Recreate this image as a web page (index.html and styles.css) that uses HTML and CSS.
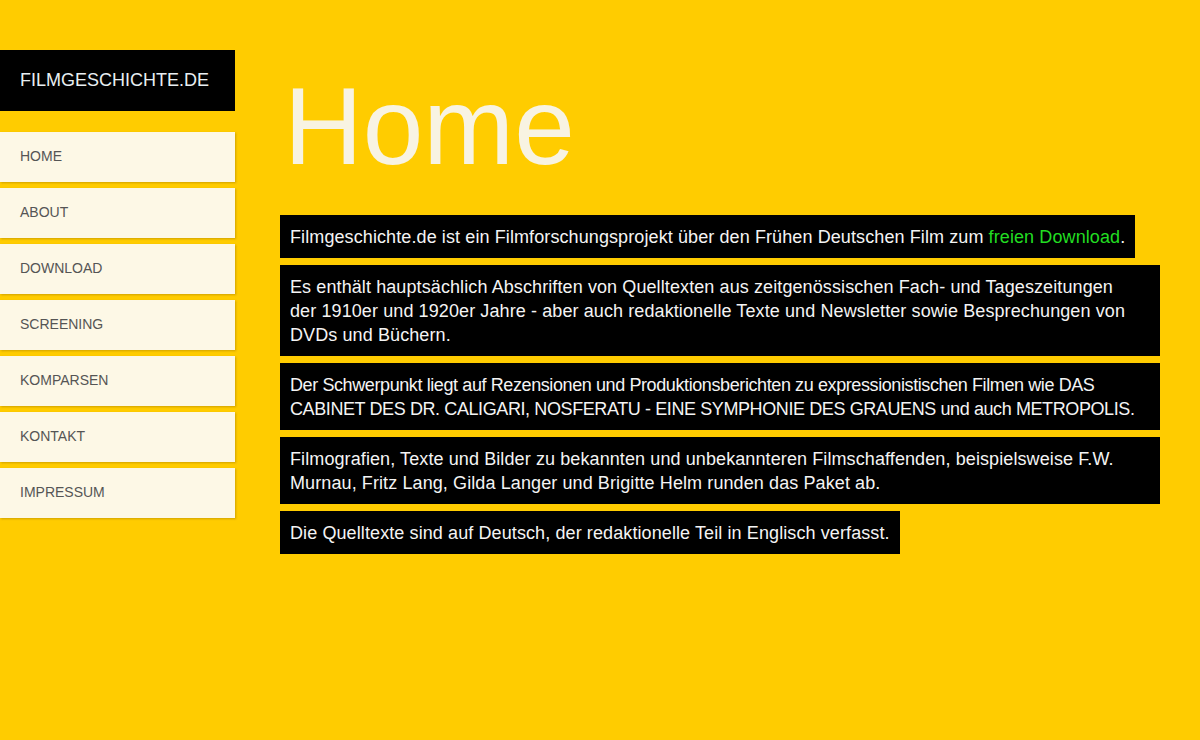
FILE: index.html
```
<!DOCTYPE html>
<html lang="de">
<head>
<meta charset="utf-8">
<title>Filmgeschichte.de</title>
<link rel="stylesheet" href="styles.css">
</head>
<body>
<div class="page">
  <aside class="sidebar">
    <div class="logo">FILMGESCHICHTE.DE</div>
    <nav class="nav">
      <a class="nav-item" href="#">HOME</a>
      <a class="nav-item" href="#">ABOUT</a>
      <a class="nav-item" href="#">DOWNLOAD</a>
      <a class="nav-item" href="#">SCREENING</a>
      <a class="nav-item" href="#">KOMPARSEN</a>
      <a class="nav-item" href="#">KONTAKT</a>
      <a class="nav-item" href="#">IMPRESSUM</a>
    </nav>
  </aside>
  <main class="main">
    <h1 class="title">Home</h1>
    <div class="boxes">
      <p class="box">Filmgeschichte.de ist ein Filmforschungsprojekt über den Frühen Deutschen Film zum <a class="link" href="#">freien Download</a>.</p>
      <p class="box">Es enthält hauptsächlich Abschriften von Quelltexten aus zeitgenössischen Fach- und Tageszeitungen<br>der 1910er und 1920er Jahre - aber auch redaktionelle Texte und Newsletter sowie Besprechungen von DVDs und Büchern.</p>
      <p class="box box-tight">Der Schwerpunkt liegt auf Rezensionen und Produktionsberichten zu expressionistischen Filmen wie DAS CABINET DES DR. CALIGARI, NOSFERATU - EINE SYMPHONIE DES GRAUENS und auch METROPOLIS.</p>
      <p class="box">Filmografien, Texte und Bilder zu bekannten und unbekannteren Filmschaffenden, beispielsweise F.W. Murnau, Fritz Lang, Gilda Langer und Brigitte Helm runden das Paket ab.</p>
      <p class="box">Die Quelltexte sind auf Deutsch, der redaktionelle Teil in Englisch verfasst.</p>
    </div>
  </main>
</div>
</body>
</html>
```
FILE: styles.css
```
html, body {
  margin: 0;
  padding: 0;
}
body {
  background: #ffcc00;
  font-family: "Liberation Sans", Arial, sans-serif;
  height: 740px;
  overflow: hidden;
}
.page {
  display: flex;
  align-items: flex-start;
}
.sidebar {
  width: 235px;
  flex: none;
  margin-top: 50px;
}
.logo {
  background: #000;
  color: #e8eef2;
  font-size: 18px;
  height: 61px;
  line-height: 61px;
  padding-left: 20px;
}
.nav {
  display: flex;
  flex-direction: column;
  gap: 6px;
  margin-top: 21px;
}
.nav-item {
  display: block;
  background: #fdf8e6;
  color: #555;
  font-size: 14px;
  height: 50px;
  line-height: 49px;
  padding-left: 20px;
  text-decoration: none;
  box-shadow: 1px 1px 2px rgba(120, 80, 0, 0.35);
}
.main {
  margin-left: 45px;
  padding-top: 72px;
}
.title {
  margin: 0 0 35px;
  padding-left: 4px;
  font-size: 109px;
  line-height: 108px;
  font-weight: normal;
  color: #f8f3e2;
}
.boxes {
  display: flex;
  flex-direction: column;
  align-items: flex-start;
  gap: 7px;
}
.box {
  margin: 0;
  background: #000;
  color: #f4f4f4;
  font-size: 18px;
  letter-spacing: 0.1px;
  line-height: 24px;
  padding: 10px 10px 9px;
  max-width: 860px;
}
.box-tight {
  letter-spacing: -0.4px;
}
.link {
  color: #22dd22;
  text-decoration: none;
}
```
